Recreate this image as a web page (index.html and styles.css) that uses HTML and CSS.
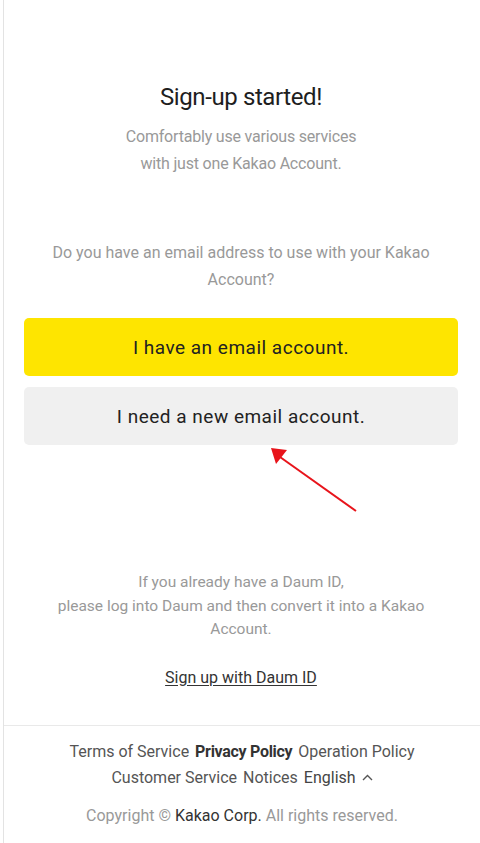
FILE: index.html
```html
<!DOCTYPE html>
<html lang="en">
<head>
<meta charset="utf-8">
<title>Kakao Account</title>
<link rel="stylesheet" href="styles.css">
</head>
<body>
<div class="page">
  <main class="content">
    <h1 class="title">Sign-up started!</h1>
    <p class="subtitle">Comfortably use various services<br>with just one Kakao Account.</p>
    <p class="question">Do you have an email address to use with your Kakao Account?</p>
    <div class="buttons">
      <button class="btn btn-yellow">I have an email account.</button>
      <button class="btn btn-gray">I need a new email account.</button>
    </div>
    <p class="daum-text">If you already have a Daum ID,<br>please log into Daum and then convert it into a Kakao Account.</p>
    <a class="daum-link" href="#">Sign up with Daum ID</a>
  </main>
  <footer class="footer">
    <nav class="links">
      <a href="#">Terms of Service</a>
      <a href="#" class="bold">Privacy Policy</a>
      <a href="#">Operation Policy</a>
      <a href="#">Customer Service</a>
      <a href="#">Notices</a>
      <a href="#" class="lang">English <svg class="caret" width="11" height="7" viewBox="0 0 11 7"><path d="M1 6 L5.5 1.5 L10 6" fill="none" stroke="#555" stroke-width="1.4"/></svg></a>
    </nav>
    <p class="copyright">Copyright © <span class="corp">Kakao Corp.</span> All rights reserved.</p>
  </footer>
  <svg class="arrow" width="100" height="72" viewBox="0 0 100 72">
    <line x1="88" y1="66" x2="12" y2="12" stroke="#e8141b" stroke-width="2"/>
    <polygon points="3,3 19,5 8,19" fill="#e8141b"/>
  </svg>
</div>
</body>
</html>
```

FILE: styles.css
```css
* { box-sizing: border-box; }
html, body { margin: 0; padding: 0; background: #fff; }
body {
  font-family: Roboto, "Noto Sans", sans-serif;
  color: #222;
}
.page {
  position: relative;
  margin-left: 3px;
  border-left: 1px solid #e3e3e3;
  min-height: 843px;
}
.content {
  padding: 82px 22px 0 20px;
  text-align: center;
}
.title {
  margin: 0;
  font-size: 24px;
  line-height: 30px;
  font-weight: 400;
  color: #1e1e1e;
  letter-spacing: -0.4px;
}
.subtitle {
  margin: 11px 0 0;
  font-size: 16px;
  line-height: 27px;
  color: #999;
  letter-spacing: -0.2px;
}
.question {
  margin: 62px 10px 0;
  font-size: 16px;
  line-height: 27px;
  color: #999;
  letter-spacing: 0;
}
.buttons {
  margin-top: 25px;
  display: flex;
  flex-direction: column;
  gap: 11px;
}
.btn {
  display: block;
  width: 100%;
  height: 58px;
  border: 0;
  border-radius: 5px;
  font-family: Roboto, "Noto Sans", sans-serif;
  font-size: 19px;
  color: #222;
  letter-spacing: 0.5px;
  cursor: pointer;
}
.btn-yellow { background: #fee500; }
.btn-gray { background: #f0f0f0; }
.daum-text {
  margin: 126px 20px 0;
  font-size: 15.5px;
  line-height: 23.5px;
  color: #999;
  letter-spacing: 0;
}
.daum-link {
  display: inline-block;
  margin-top: 24px;
  font-size: 16px;
  line-height: 24px;
  color: #333;
  text-decoration: underline;
  text-underline-offset: 2px;
}
.footer {
  margin-top: 35px;
  border-top: 1px solid #e9e9e9;
  padding: 13px 30px 0;
  text-align: center;
}
.links {
  display: flex;
  flex-wrap: wrap;
  justify-content: center;
  column-gap: 6px;
  row-gap: 0;
  font-size: 16px;
  line-height: 26px;
}
.links a {
  color: #555;
  text-decoration: none;
}
.links a.bold { font-weight: 700; color: #333; letter-spacing: -0.3px; }
.links a.lang { color: #444; }
.caret { margin-left: 2px; vertical-align: 2px; }
.copyright {
  margin: 14px 0 0;
  font-size: 16px;
  line-height: 22px;
  color: #999;
}
.corp { color: #333; }
.arrow {
  position: absolute;
  left: 264px;
  top: 445px;
}
```
